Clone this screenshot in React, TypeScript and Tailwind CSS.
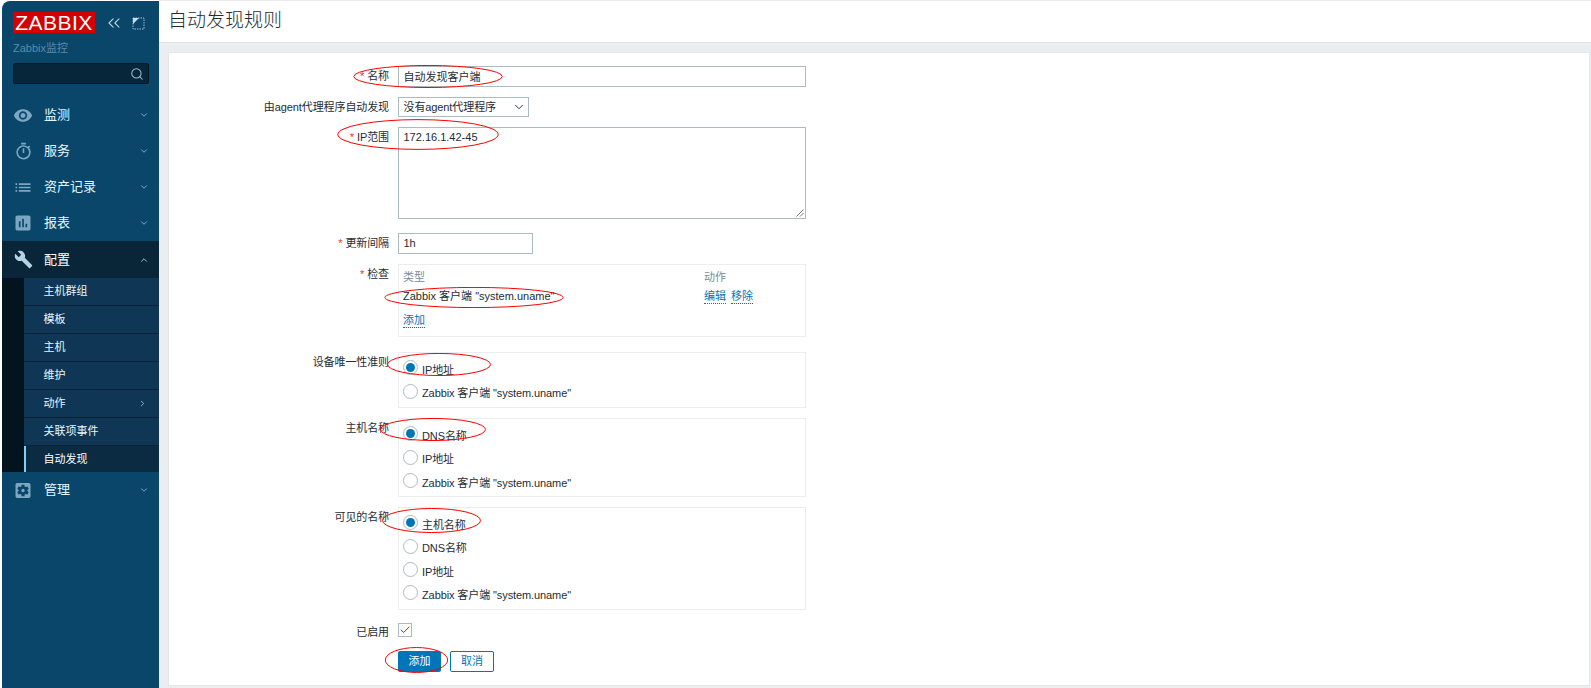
import type { ReactNode } from 'react';
import { ChevronDown, ChevronUp, ChevronRight, ChevronsLeft, Search, Check } from 'lucide-react';
import {
  MdVisibility,
  MdOutlineTimer,
  MdList,
  MdAssessment,
  MdBuild,
  MdSettingsApplications,
} from 'react-icons/md';

const CJK = "font-['Liberation_Sans','Noto_Sans_CJK_SC',sans-serif]";

const subItems = ['主机群组', '模板', '主机', '维护', '动作', '关联项事件'];

const NavRow = ({ icon, label, open, active }: { icon: ReactNode; label: string; open?: boolean; active?: boolean }) => (
  <div className={`flex items-center pl-[11px] pr-[10px] ${active ? 'h-[37px] bg-[#082638]' : 'h-[36px]'}`}>
    <span className="flex w-[20px] justify-center text-[#7ba7c2]">{icon}</span>
    <span className={`ml-[11px] flex-1 text-[13px] ${active ? 'text-white' : 'text-[#e6f6ff]'}`}>{label}</span>
    {open ? (
      <ChevronUp size={10} strokeWidth={2} className="text-[#c5d6e0]" />
    ) : (
      <ChevronDown size={10} strokeWidth={2} className="text-[#9fbccd]" />
    )}
  </div>
);

const Sidebar = () => (
  <aside className="ml-[2px] mt-px h-[687px] w-[157px] shrink-0 overflow-hidden rounded-tl-lg bg-[#0a466a]">
    {/* Logo */}
    <div className="flex items-start pl-[11px] pt-[11px]">
      <div className="flex h-[21px] w-[82px] items-center justify-center bg-[#d40000] font-['Liberation_Sans',sans-serif] text-[21px] leading-none tracking-[0.5px] text-white">
        ZABBIX
      </div>
      <ChevronsLeft size={20} strokeWidth={1.3} className="ml-[9px] mt-[1px] text-[#b9d2e0]" />
      <svg width="13" height="13" viewBox="0 0 13 13" className="ml-[8px] mt-[5px]" fill="none">
        <rect x="1" y="1" width="11" height="11" stroke="#9fbccd" strokeDasharray="1.5 1" />
        <path d="M1 1h6L1 7z" fill="#c9dce7" />
      </svg>
    </div>
    <div className="mt-[8px] pl-[11px] text-[11px] leading-[14px] text-[#5d8ba8]">Zabbix监控</div>
    <div className="ml-[11px] mr-[10px] mt-[8px] flex h-[21px] items-center justify-end rounded-[2px] border border-[#041722] bg-[#08263a] pr-[4px]">
      <Search size={14} strokeWidth={1.8} className="text-[#9fbccd]" />
    </div>

    <nav className="mt-[13px]">
      <NavRow icon={<MdVisibility size={23} />} label="监测" />
      <NavRow icon={<MdOutlineTimer size={19} />} label="服务" />
      <NavRow icon={<MdList size={23} />} label="资产记录" />
      <NavRow icon={<MdAssessment size={22} />} label="报表" />
      <NavRow icon={<MdBuild size={19} className="text-[#b4d2e5]" />} label="配置" open active />

      {/* 子菜单 */}
      <div className="flex bg-[#04141f]">
        <div className="w-[22px] shrink-0" />
        <div className="flex-1">
          {subItems.map(item => (
            <div
              key={item}
              className="flex h-[28px] items-center border-b border-[#0a2338] bg-[#0f3654] pl-[19.5px] pr-[12px] text-[11px] text-[#e6f6ff]"
            >
              <span className="flex-1">{item}</span>
              {item === '动作' && <ChevronRight size={9} strokeWidth={2} className="text-[#c5d6e0]" />}
            </div>
          ))}
          <div className="flex h-[26px] items-center border-l-2 border-[#7fd0f5] bg-[#0a2b42] pl-[17.5px] text-[11px] text-white">
            自动发现
          </div>
        </div>
      </div>

      <NavRow icon={<MdSettingsApplications size={23} />} label="管理" />
    </nav>
  </aside>
);

const Label = ({ text, required }: { text: string; required?: boolean }) => (
  <div className="w-[229px] shrink-0 pr-[9px] pt-[3px] text-right text-[11px] leading-[14px] tracking-[-0.1px] text-[#1f2c33]">
    {required && <span className="mr-[3px] text-[#e33734]">*</span>}
    {text}
  </div>
);

const Row = ({ label, required, className, children }: { label: string; required?: boolean; className?: string; children: ReactNode }) => (
  <div className={`flex ${className ?? ''}`}>
    <Label text={label} required={required} />
    {children}
  </div>
);

const inputBox = 'border border-[#acbbc2] bg-white pl-[4.5px] text-[11px] text-[#1f2c33]';

const Radio = ({ label, checked }: { label: string; checked?: boolean }) => (
  <div className="flex h-[23.4px] items-center text-[11px] tracking-[-0.1px] text-[#1f2c33]">
    <span className="flex h-[15px] w-[15px] items-center justify-center rounded-full border border-[#acbbc2] bg-white">
      {checked && <span className="h-[9px] w-[9px] rounded-full bg-[#0275b8]" />}
    </span>
    <span className="ml-[4px] mt-[5px]">{label}</span>
  </div>
);

const RadioBox = ({ options, height }: { options: string[]; height: string }) => (
  <div className={`w-[408px] border border-[#ebeef0] pl-[4px] pt-[3px] ${height}`}>
    {options.map((option, index) => (
      <Radio key={option} label={option} checked={index === 0} />
    ))}
  </div>
);

const Oval = ({ className }: { className: string }) => (
  <svg className={`pointer-events-none absolute ${className}`} viewBox="0 0 100 100" preserveAspectRatio="none" fill="none">
    <ellipse cx="50" cy="50" rx="49.5" ry="48" stroke="#ff0000" strokeWidth="1" vectorEffect="non-scaling-stroke" />
  </svg>
);

const DetectionForm = () => (
  <div className="flex-1 border border-[#e3e7ea] bg-white pt-[13px]">
    <Row label="名称" required>
      <div className={`flex h-[21px] w-[408px] items-center pt-px ${inputBox}`}>自动发现客户端</div>
    </Row>
    <Row label="由agent代理程序自动发现" className="mt-[10px]">
      <div className={`flex h-[20px] w-[131px] items-center justify-between tracking-[-0.1px] ${inputBox} pr-[2px]`}>
        <span>没有agent代理程序</span>
        <ChevronDown size={14} strokeWidth={1.6} className="text-[#1f2c33]" />
      </div>
    </Row>
    <Row label="IP范围" required className="mt-[10px]">
      <div className={`relative h-[92px] w-[408px] pt-[2px] leading-[14px] ${inputBox}`}>
        172.16.1.42-45
        <svg width="8" height="8" viewBox="0 0 8 8" className="absolute bottom-px right-px" stroke="#555" strokeWidth="0.8">
          <path d="M0.5 7.5L7.5 0.5M4 7.5L7.5 4" />
        </svg>
      </div>
    </Row>
    <Row label="更新间隔" required className="mt-[14px]">
      <div className={`flex h-[21px] w-[135px] items-center ${inputBox}`}>1h</div>
    </Row>
    <Row label="检查" required className="mt-[10px]">
      <div className="h-[73px] w-[408px] border border-[#ebeef0] pl-[4px] pt-[5px] text-[11px] leading-[14px] text-[#1f2c33]">
        <div className="flex text-[#768d99]">
          <span className="w-[301px]">类型</span>
          <span>动作</span>
        </div>
        <div className="mt-[5px] flex">
          <span className="w-[301px]">Zabbix 客户端 &quot;system.uname&quot;</span>
          <span className="flex gap-[5px] text-[#0275b8]">
            <span className="border-b border-dotted border-[#0275b8]">编辑</span>
            <span className="border-b border-dotted border-[#0275b8]">移除</span>
          </span>
        </div>
        <div className="mt-[9px] w-fit border-b border-dotted border-[#0275b8] text-[#0275b8]">添加</div>
      </div>
    </Row>
    <Row label="设备唯一性准则" className="mt-[15px]">
      <RadioBox height="h-[56px]" options={['IP地址', 'Zabbix 客户端 "system.uname"']} />
    </Row>
    <Row label="主机名称" className="mt-[10px]">
      <RadioBox height="h-[79px]" options={['DNS名称', 'IP地址', 'Zabbix 客户端 "system.uname"']} />
    </Row>
    <Row label="可见的名称" className="mt-[10px]">
      <RadioBox height="h-[103px]" options={['主机名称', 'DNS名称', 'IP地址', 'Zabbix 客户端 "system.uname"']} />
    </Row>
    <Row label="已启用" className="mt-[12px]">
      <span className="mt-px flex h-[14px] w-[14px] items-center justify-center border border-[#acbbc2]">
        <Check size={12} strokeWidth={2} className="text-[#0275b8]" />
      </span>
    </Row>
    <div className="ml-[229px] mt-[12px] flex gap-[9px] text-[11px]">
      <button className="h-[21px] w-[43px] rounded-[2px] bg-[#0275b8] text-white">添加</button>
      <button className="h-[21px] w-[44px] rounded-[2px] border border-[#0275b8] bg-white text-[#0275b8]">取消</button>
    </div>
  </div>
);

const App = () => (
  <div className={`relative flex h-[688px] w-full overflow-hidden bg-white ${CJK}`}>
    <Sidebar />
    <main className="flex min-w-0 flex-1 flex-col border-t border-[#e8ebed] bg-[#ebeef0]">
      <header className="flex h-[42px] items-center border-b border-[#dfe4e7] bg-white pl-[9px] text-[19px] font-light text-[#1f2c33]">
        自动发现规则
      </header>
      <div className="flex min-h-0 flex-1 pb-[2px] pl-[9px] pr-px pt-[9px]">
        <DetectionForm />
      </div>
    </main>

    {/* 截图上的红色标注圈 */}
    <Oval className="left-[353px] top-[65px] h-[23px] w-[150px]" />
    <Oval className="left-[337px] top-[119px] h-[31px] w-[162px]" />
    <Oval className="left-[384px] top-[287px] h-[21px] w-[180px]" />
    <Oval className="left-[387px] top-[353px] h-[23px] w-[104px]" />
    <Oval className="left-[380px] top-[418px] h-[23px] w-[106px]" />
    <Oval className="left-[382px] top-[508px] h-[25px] w-[99px]" />
    <Oval className="left-[385px] top-[647px] h-[26px] w-[63px]" />
  </div>
);

export default App;
